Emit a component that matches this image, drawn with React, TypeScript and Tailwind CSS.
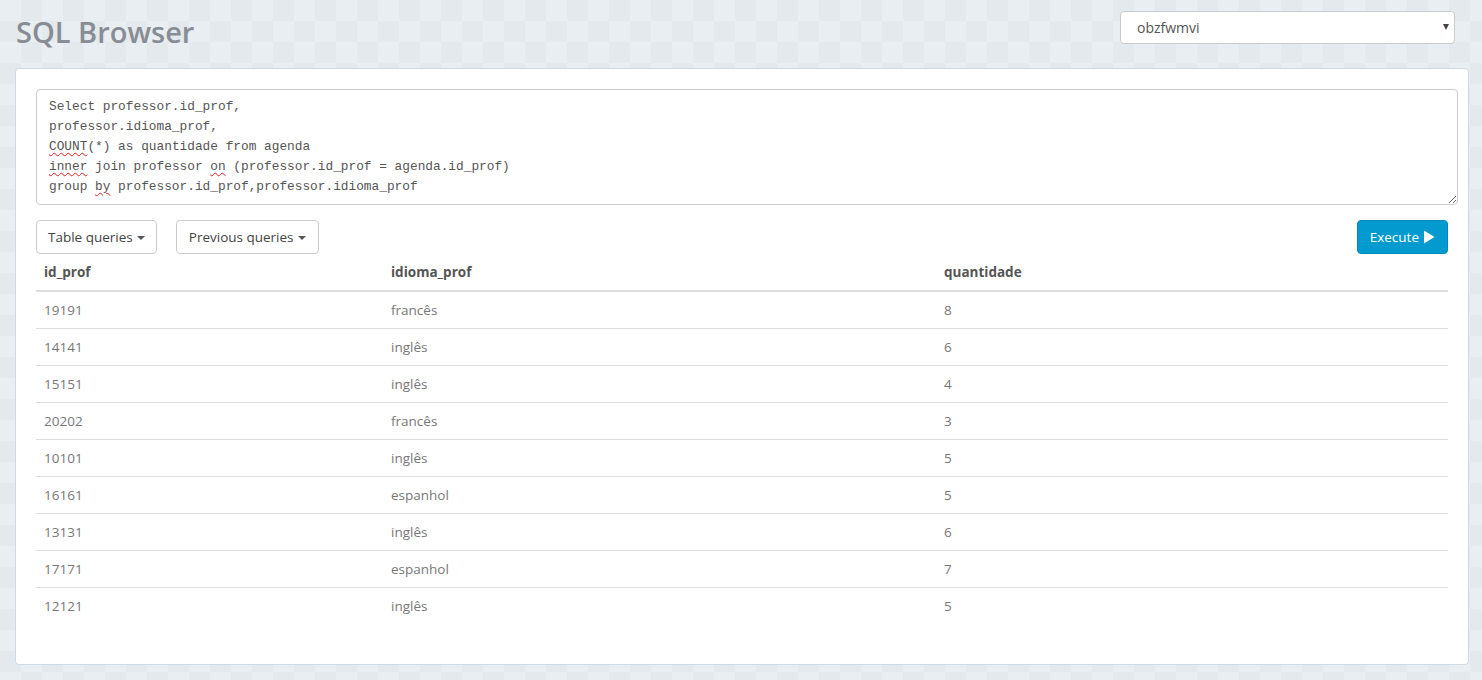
const rows = [
  ['19191', 'francês', '8'],
  ['14141', 'inglês', '6'],
  ['15151', 'inglês', '4'],
  ['20202', 'francês', '3'],
  ['10101', 'inglês', '5'],
  ['16161', 'espanhol', '5'],
  ['13131', 'inglês', '6'],
  ['17171', 'espanhol', '7'],
  ['12121', 'inglês', '5'],
];

function Typo({ children }: { children: React.ReactNode }) {
  return <span className="underline decoration-[#e02020] decoration-wavy decoration-1 underline-offset-[2px]">{children}</span>;
}

function Caret() {
  return <span className="ml-1 inline-block h-0 w-0 border-x-[4px] border-t-[4px] border-x-transparent border-t-[#555] align-middle" />;
}

export default function App() {
  return (
    <div
      className="min-h-[680px] bg-[#e6ecef] bg-[repeating-conic-gradient(#e3e9ec_0_25%,#e8eef1_0_50%)] bg-[length:42px_42px] pl-[15px] pr-[13px] pt-[11px] pb-[15px] text-[13.5px] text-[#777]"
      style={{ fontFamily: '"Open Sans", "Noto Sans", sans-serif' }}
    >
      <div className="flex items-start justify-between">
        <h1 className="pl-px pt-[3px] text-[29px] font-semibold leading-[36px] text-[#888c94]">SQL Browser</h1>
        <div className="relative mr-[14px] w-[335px]">
          <div className="flex h-[33px] w-full items-center rounded-[4px] border border-[#ccc] bg-white pl-[16px] text-[14px] text-[#555]">
            obzfwmvi
          </div>
          <span className="pointer-events-none absolute right-[6px] top-[13px] h-0 w-0 border-x-[3.5px] border-t-[6px] border-x-transparent border-t-[#444]" />
        </div>
      </div>

      <section className="mt-[18px] h-[597px] rounded-[4px] border border-[#cfdbe4] bg-white pl-[20px] pr-[10px] pt-[20px]">
        <div
          className="h-[116px] w-full resize-y overflow-auto whitespace-pre rounded-[4px] border border-[#ccc] px-[12px] pt-[7px] text-[12.8px] leading-[20px] text-[#555]"
          style={{ fontFamily: 'Consolas, "Liberation Mono", "DejaVu Sans Mono", monospace' }}
        >
          {'Select professor.id_prof,\nprofessor.idioma_prof,\n'}
          <Typo>COUNT</Typo>
          {'(*) as quantidade from agenda\n'}
          <Typo>inner</Typo>
          {' join professor '}
          <Typo>on</Typo>
          {' (professor.id_prof = agenda.id_prof)\ngroup '}
          <Typo>by</Typo>
          {' professor.id_prof,professor.idioma_prof'}
        </div>

        <div className="mt-[15px] flex items-center pr-[10px]">
          <button className="h-[34px] rounded-[4px] border border-[#ccc] bg-white px-[11px] text-[13.5px] text-[#444]">
            Table queries<Caret />
          </button>
          <button className="ml-[19px] h-[34px] rounded-[4px] border border-[#ccc] bg-white px-[12px] text-[13.5px] text-[#444]">
            Previous queries<Caret />
          </button>
          <button className="ml-auto flex h-[34px] items-center rounded-[4px] border border-[#0288b8] bg-[#029acf] px-[12px] text-[13.5px] text-white">
            Execute
            <svg width="12" height="14" viewBox="0 0 12 14" className="ml-[4px]">
              <path d="M1 0.5 L11.5 7 L1 13.5 Z" fill="white" />
            </svg>
          </button>
        </div>

        <table className="w-[calc(100%-10px)] border-collapse text-left">
          <thead>
            <tr className="border-b-2 border-[#ddd]">
              <th className="w-[347px] p-[8px] font-bold text-[#555]">id_prof</th>
              <th className="w-[553px] p-[8px] font-bold text-[#555]">idioma_prof</th>
              <th className="p-[8px] font-bold text-[#555]">quantidade</th>
            </tr>
          </thead>
          <tbody>
            {rows.map((r, i) => (
              <tr key={i} className={i < rows.length - 1 ? 'border-b border-[#ddd]' : ''}>
                <td className="h-[37px] px-[8px] py-0 align-middle">{r[0]}</td>
                <td className="h-[37px] px-[8px] py-0 align-middle">{r[1]}</td>
                <td className="h-[37px] px-[8px] py-0 align-middle">{r[2]}</td>
              </tr>
            ))}
          </tbody>
        </table>
      </section>
    </div>
  );
}
